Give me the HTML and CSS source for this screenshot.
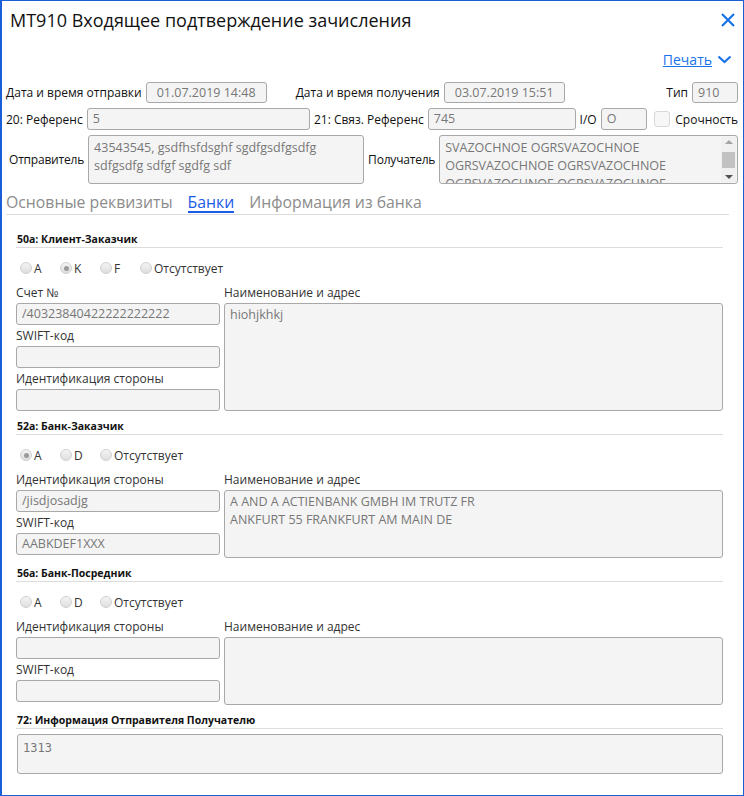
FILE: index.html
```html
<!DOCTYPE html>
<html lang="ru">
<head>
<meta charset="utf-8">
<title>MT910</title>
<link rel="stylesheet" href="styles.css">
</head>
<body>
<div class="window">
  <header class="head">
    <h1 class="title">МТ910 Входящее подтверждение зачисления</h1>
    <svg class="close" width="16" height="16" viewBox="0 0 16 16"><path d="M2 2 L14 14 M14 2 L2 14" stroke="#1a73e8" stroke-width="2.2" fill="none"/></svg>
  </header>
  <div class="print-row">
    <a class="print">Печать</a>
    <svg class="chev" width="15" height="9" viewBox="0 0 15 9"><path d="M1.5 1.5 L7.5 7 L13.5 1.5" stroke="#1a73e8" stroke-width="2.2" fill="none"/></svg>
  </div>

  <div class="row r1">
    <span class="lbl">Дата и время отправки</span>
    <div class="box center w-date">01.07.2019 14:48</div>
    <span class="lbl ml-gap">Дата и время получения</span>
    <div class="box center w-date">03.07.2019 15:51</div>
    <span class="lbl push">Тип</span>
    <div class="box w-type">910</div>
  </div>

  <div class="row r2">
    <span class="lbl">20: Референс</span>
    <div class="box w-ref">5</div>
    <span class="lbl">21: Связ. Референс</span>
    <div class="box w-ref2">745</div>
    <span class="lbl">I/O</span>
    <div class="box w-io">O</div>
    <span class="check"></span>
    <span class="lbl">Срочность</span>
  </div>

  <div class="row r3">
    <span class="lbl lbl-sender">Отправитель</span>
    <div class="area w-sender">43543545, gsdfhsfdsghf sgdfgsdfgsdfg<br>sdfgsdfg sdfgf sgdfg sdf</div>
    <span class="lbl lbl-recv">Получатель</span>
    <div class="area w-recv">
      <div class="area-text">SVAZOCHNOE OGRSVAZOCHNOE<br>OGRSVAZOCHNOE OGRSVAZOCHNOE<br>OGRSVAZOCHNOE OGRSVAZOCHNOE</div>
      <div class="sbar">
        <span class="arr up"></span>
        <span class="thumb"></span>
        <span class="arr down"></span>
      </div>
    </div>
  </div>

  <nav class="tabs">
    <span class="tab">Основные реквизиты</span>
    <span class="tab active">Банки</span>
    <span class="tab">Информация из банка</span>
  </nav>

  <main class="panel">
    <section class="sec">
      <h2 class="sec-title">50а: Клиент-Заказчик</h2>
      <div class="radios">
        <span class="radio"><i class="dot"></i>A</span>
        <span class="radio"><i class="dot on"></i>K</span>
        <span class="radio"><i class="dot"></i>F</span>
        <span class="radio"><i class="dot"></i>Отсутствует</span>
      </div>
      <div class="cols">
        <div class="left">
          <div class="fld"><div class="flbl">Счет №</div><div class="box">/40323840422222222222</div></div>
          <div class="fld"><div class="flbl">SWIFT-код</div><div class="box"></div></div>
          <div class="fld"><div class="flbl">Идентификация стороны</div><div class="box"></div></div>
        </div>
        <div class="right">
          <div class="flbl">Наименование и адрес</div>
          <div class="area grow">hiohjkhkj</div>
        </div>
      </div>
    </section>

    <section class="sec">
      <h2 class="sec-title">52а: Банк-Заказчик</h2>
      <div class="radios">
        <span class="radio"><i class="dot on"></i>A</span>
        <span class="radio"><i class="dot"></i>D</span>
        <span class="radio"><i class="dot"></i>Отсутствует</span>
      </div>
      <div class="cols">
        <div class="left">
          <div class="fld"><div class="flbl">Идентификация стороны</div><div class="box">/jisdjosadjg</div></div>
          <div class="fld"><div class="flbl">SWIFT-код</div><div class="box">AABKDEF1XXX</div></div>
        </div>
        <div class="right">
          <div class="flbl">Наименование и адрес</div>
          <div class="area grow tall">A AND A ACTIENBANK GMBH IM TRUTZ FR<br>ANKFURT 55 FRANKFURT AM MAIN DE</div>
        </div>
      </div>
    </section>

    <section class="sec">
      <h2 class="sec-title">56а: Банк-Посредник</h2>
      <div class="radios">
        <span class="radio"><i class="dot"></i>A</span>
        <span class="radio"><i class="dot"></i>D</span>
        <span class="radio"><i class="dot"></i>Отсутствует</span>
      </div>
      <div class="cols">
        <div class="left">
          <div class="fld"><div class="flbl">Идентификация стороны</div><div class="box"></div></div>
          <div class="fld"><div class="flbl">SWIFT-код</div><div class="box"></div></div>
        </div>
        <div class="right">
          <div class="flbl">Наименование и адрес</div>
          <div class="area grow tall"></div>
        </div>
      </div>
    </section>

    <section class="sec">
      <h2 class="sec-title">72: Информация Отправителя Получателю</h2>
      <div class="area mono info">1313</div>
    </section>
  </main>
</div>
</body>
</html>
```

FILE: styles.css
```css
* { box-sizing: border-box; }
html, body { margin: 0; padding: 0; background: #fff; }
.window {
  width: 744px;
  height: 796px;
  border: 1px solid #1a5fd8;
  border-left-width: 2px;
  font-family: "Open Sans", "Noto Sans", sans-serif;
  font-size: 12px;
  color: #222;
  overflow: hidden;
}
.head {
  display: flex;
  justify-content: space-between;
  align-items: flex-start;
  padding: 5px 7px 0 8px;
}
.title {
  margin: 0;
  font-size: 18px;
  font-weight: 400;
  line-height: 28px;
  color: #111;
}
.close { margin-top: 6px; }
.print-row {
  display: flex;
  justify-content: flex-end;
  align-items: center;
  gap: 5px;
  padding: 13px 11px 0 0;
  height: 37px;
}
.print {
  color: #1a73e8;
  text-decoration: underline;
  font-size: 14px;
}
.chev { margin-top: 1px; }
.row {
  display: flex;
  align-items: center;
  gap: 4px;
  padding: 0 5px 0 4px;
}
.r1 { margin-top: 11px; }
.r2 { margin-top: 5px; }
.r3 { margin-top: 5px; }
.lbl { white-space: nowrap; color: #111; }
.ml-gap { margin-left: 25px; }
.push { margin-left: auto; }
.box {
  height: 22px;
  line-height: 20px;
  border: 1px solid #a8a8a8;
  border-radius: 3px;
  background: #f4f4f4;
  color: #777;
  padding: 0 5px;
  white-space: nowrap;
  overflow: hidden;
  font-size: 12.5px;
}
.r1 .box { height: 21px; line-height: 19px; }
.center { text-align: center; }
.w-date { width: 121px; }
.w-type { width: 46px; }
.w-ref { width: 225px; }
.w-ref2 { width: 149px; }
.w-io { width: 47px; }
.check {
  width: 16px;
  height: 16px;
  border: 1px solid #d8d8d8;
  border-radius: 3px;
  background: #f7f7f7;
  margin: 0 1px 0 3px;
}
.lbl-sender { padding-left: 3px; letter-spacing: -0.2px; }
.lbl-recv { letter-spacing: -0.2px; }
.area {
  border: 1px solid #a8a8a8;
  border-radius: 3px;
  background: #f4f4f4;
  color: #777;
  padding: 2px 5px;
  line-height: 18px;
  overflow: hidden;
  font-size: 12.5px;
}
.w-sender { width: 276px; height: 49px; padding-top: 3px; white-space: nowrap; }
.w-recv {
  flex: 1;
  height: 49px;
  display: flex;
  padding: 0 0 0 5px;
}
.area-text { flex: 1; padding-top: 3px; white-space: nowrap; overflow: hidden; }
.sbar {
  width: 15px;
  margin: 1px 1px 1px 0;
  background: #f0f0f0;
  display: flex;
  flex-direction: column;
  align-items: center;
  justify-content: space-between;
  padding: 3px 0;
}
.thumb {
  width: 13px;
  flex: 0 0 16px;
  background: #c2c2c2;
  margin: 2px 0;
}
.arr { width: 0; height: 0; border-left: 4px solid transparent; border-right: 4px solid transparent; }
.arr.up { border-bottom: 4px solid #a3a3a3; }
.arr.down { border-top: 4px solid #505050; }
.tabs {
  display: flex;
  gap: 15px;
  margin: 6px 14px 0 4px;
  border-bottom: 1px solid #dcdcdc;
  height: 25px;
}
.tab {
  font-size: 15.8px;
  color: #8c8c8c;
  line-height: 24px;
  white-space: nowrap;
}
.tab.active {
  color: #1a5ce6;
  border-bottom: 2px solid #1a5ce6;
  height: 23px;
}
.panel { padding: 9px 20px 0 14px; }
.sec-title {
  margin: 7px 0 0;
  font-size: 10.5px;
  font-weight: 700;
  line-height: 16px;
  padding-left: 1px;
  border-bottom: 1px solid #dcdcdc;
  color: #111;
}
.radios {
  display: flex;
  height: 18px;
  margin: 11px 0 7px 4px;
  align-items: center;
}
.radio {
  display: inline-flex;
  align-items: center;
  gap: 2px;
  width: 40px;
  color: #333;
}
.radio:last-child { width: auto; }
.dot {
  width: 12px;
  height: 12px;
  border-radius: 50%;
  border: 1px solid #d0d0d0;
  background: linear-gradient(#f4f4f4, #dedede);
  display: inline-flex;
  align-items: center;
  justify-content: center;
}
.dot.on::after {
  content: "";
  width: 5px;
  height: 5px;
  border-radius: 50%;
  background: #9a9a9a;
}
.cols { display: flex; gap: 4px; }
.left { width: 204px; display: flex; flex-direction: column; gap: 2px; }
.right { flex: 1; display: flex; flex-direction: column; }
.flbl { line-height: 18px; height: 19px; color: #333; white-space: nowrap; }
.fld .box { height: 22px; }
.grow { flex: 1; }
.tall { min-height: 68px; }
.mono { font-family: "DejaVu Sans Mono", monospace; font-size: 12px; }
.info { margin: 5px 0 0 1px; height: 40px; padding-top: 4px; }
```
